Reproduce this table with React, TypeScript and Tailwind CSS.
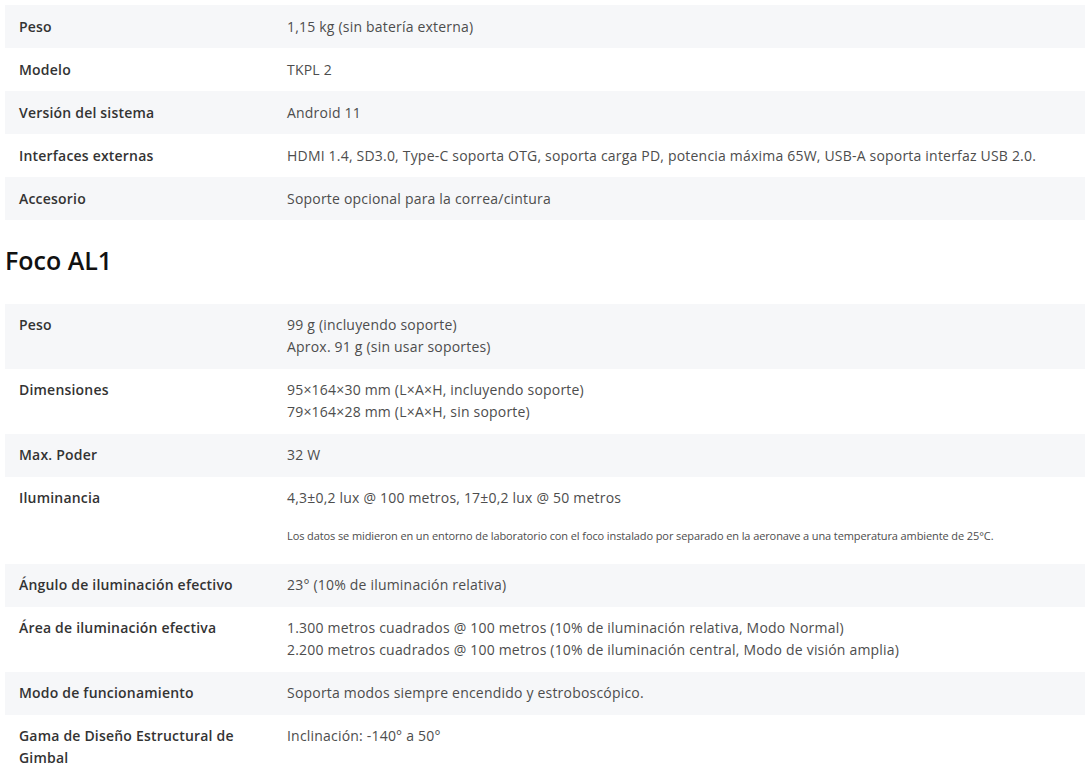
type Row = { label: string; values: string[]; note?: string }

const tablaControl: Row[] = [
  { label: "Peso", values: ["1,15 kg (sin batería externa)"] },
  { label: "Modelo", values: ["TKPL 2"] },
  { label: "Versión del sistema", values: ["Android 11"] },
  {
    label: "Interfaces externas",
    values: ["HDMI 1.4, SD3.0, Type-C soporta OTG, soporta carga PD, potencia máxima 65W, USB-A soporta interfaz USB 2.0."],
  },
  { label: "Accesorio", values: ["Soporte opcional para la correa/cintura"] },
]

const tablaFoco: Row[] = [
  { label: "Peso", values: ["99 g (incluyendo soporte)", "Aprox. 91 g (sin usar soportes)"] },
  { label: "Dimensiones", values: ["95×164×30 mm (L×A×H, incluyendo soporte)", "79×164×28 mm (L×A×H, sin soporte)"] },
  { label: "Max. Poder", values: ["32 W"] },
  {
    label: "Iluminancia",
    values: ["4,3±0,2 lux @ 100 metros, 17±0,2 lux @ 50 metros"],
    note: "Los datos se midieron en un entorno de laboratorio con el foco instalado por separado en la aeronave a una temperatura ambiente de 25°C.",
  },
  { label: "Ángulo de iluminación efectivo", values: ["23° (10% de iluminación relativa)"] },
  {
    label: "Área de iluminación efectiva",
    values: [
      "1.300 metros cuadrados @ 100 metros (10% de iluminación relativa, Modo Normal)",
      "2.200 metros cuadrados @ 100 metros (10% de iluminación central, Modo de visión amplia)",
    ],
  },
  { label: "Modo de funcionamiento", values: ["Soporta modos siempre encendido y estroboscópico."] },
  { label: "Gama de Diseño Estructural de Gimbal", values: ["Inclinación: -140° a 50°"] },
]

const SpecTable = ({ rows, cell }: { rows: Row[]; cell: string }) => (
  <div className="w-[1080px]">
    {rows.map((r, i) => (
      <div key={r.label} className={`flex ${i % 2 === 0 ? "bg-[#f6f7f9]" : "bg-white"}`}>
        <div className={`w-[268px] shrink-0 px-[14px] ${cell} font-semibold text-[#333333]`}>
          {r.label}
        </div>
        <div className={`flex-1 px-[14px] ${cell} text-[#4d4d4d]`}>
          {r.values.map(v => (
            <div key={v}>{v}</div>
          ))}
          {r.note && (
            <div className="mt-[19px] mb-[9px] text-[11px] leading-[16px] tracking-[-0.1px]">{r.note}</div>
          )}
        </div>
      </div>
    ))}
  </div>
)

export default function App() {
  return (
    <div className="min-h-screen bg-white pt-[5px] pl-[5px] text-[14px] leading-[22px] tracking-[0.2px] font-['Open_Sans',sans-serif]">
      <SpecTable rows={tablaControl} cell="pt-[11px] pb-[10px]" />
      <h2 className="pt-[23px] pb-[27px] text-[25px] leading-[34px] tracking-normal font-semibold text-[#111111]">Foco AL1</h2>
      <SpecTable rows={tablaFoco} cell="pt-[10px] pb-[11px]" />
    </div>
  )
}
